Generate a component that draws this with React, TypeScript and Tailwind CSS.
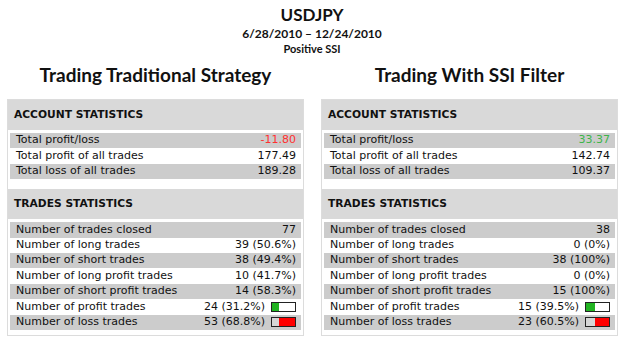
import React from "react";

type Row = { label: string; value: string; color?: string; bar?: { pct: number; kind: "profit" | "loss" } };

const left = {
	title: "Trading Traditional Strategy",
	account: [
		{ label: "Total profit/loss", value: "-11.80", color: "text-[#ff3030]" },
		{ label: "Total profit of all trades", value: "177.49" },
		{ label: "Total loss of all trades", value: "189.28" },
	] as Row[],
	trades: [
		{ label: "Number of trades closed", value: "77" },
		{ label: "Number of long trades", value: "39 (50.6%)" },
		{ label: "Number of short trades", value: "38 (49.4%)" },
		{ label: "Number of long profit trades", value: "10 (41.7%)" },
		{ label: "Number of short profit trades", value: "14 (58.3%)" },
		{ label: "Number of profit trades", value: "24 (31.2%)", bar: { pct: 31.2, kind: "profit" } },
		{ label: "Number of loss trades", value: "53 (68.8%)", bar: { pct: 68.8, kind: "loss" } },
	] as Row[],
};

const right = {
	title: "Trading With SSI Filter",
	account: [
		{ label: "Total profit/loss", value: "33.37", color: "text-[#3db54a]" },
		{ label: "Total profit of all trades", value: "142.74" },
		{ label: "Total loss of all trades", value: "109.37" },
	] as Row[],
	trades: [
		{ label: "Number of trades closed", value: "38" },
		{ label: "Number of long trades", value: "0 (0%)" },
		{ label: "Number of short trades", value: "38 (100%)" },
		{ label: "Number of long profit trades", value: "0 (0%)" },
		{ label: "Number of short profit trades", value: "15 (100%)" },
		{ label: "Number of profit trades", value: "15 (39.5%)", bar: { pct: 39.5, kind: "profit" } },
		{ label: "Number of loss trades", value: "23 (60.5%)", bar: { pct: 60.5, kind: "loss" } },
	] as Row[],
};

function Bar({ pct, kind }: { pct: number; kind: "profit" | "loss" }) {
	return (
		<span className="ml-[6px] flex h-[10px] w-[25px] border border-[#222]">
			{kind === "profit" ? (
				<>
					<span className="h-full bg-[#22b422]" style={{ width: `${pct}%` }} />
					<span className="h-full flex-1 bg-white" />
				</>
			) : (
				<>
					<span className="h-full flex-1 bg-[#d6d6d6]" />
					<span className="h-full bg-[#ff0000]" style={{ width: `${pct}%` }} />
				</>
			)}
		</span>
	);
}

function Rows({ rows }: { rows: Row[] }) {
	return (
		<div className="flex flex-col">
			{rows.map((r, i) => (
				<div
					key={r.label}
					className={`flex h-[15.4px] items-center justify-between pl-[6px] pr-[5px] ${i % 2 === 0 ? "bg-[#cccccc]" : "bg-white"}`}
				>
					<span>{r.label}</span>
					<span className={`flex items-center ${r.color ?? ""}`}>
						{r.value}
						{r.bar && <Bar pct={r.bar.pct} kind={r.bar.kind} />}
					</span>
				</div>
			))}
		</div>
	);
}

function Panel({ data }: { data: typeof left }) {
	return (
		<div className="flex w-[297px] flex-col items-center">
			<h2 className="h-[36px] text-[19px] font-bold leading-[36px] text-[#111] [font-family:Lato,'Open_Sans',sans-serif]">
				{data.title}
			</h2>
			<div className="mt-[6px] w-full border border-[#dcdcdc] text-[11px] text-[#111] [font-family:'DejaVu_Sans',Verdana,sans-serif]">
				<div className="flex h-[30px] items-center bg-[#d9d9d9] pl-[6px] text-[10.7px] font-bold">ACCOUNT STATISTICS</div>
				<div className="bg-white px-[2px] pt-[3px] pb-[10px]">
					<Rows rows={data.account} />
				</div>
				<div className="flex h-[30px] items-center bg-[#d9d9d9] pl-[6px] text-[10.7px] font-bold">TRADES STATISTICS</div>
				<div className="bg-white px-[2px] pt-[3px] pb-[5px]">
					<Rows rows={data.trades} />
				</div>
			</div>
		</div>
	);
}

export default function App() {
	return (
		<div className="h-[337px] w-[624px] overflow-hidden bg-white [font-family:Lato,'Open_Sans',sans-serif]">
			<div className="flex flex-col items-center pt-[4px] font-bold text-[#111]">
				<div className="text-[17px] leading-[22px]">USDJPY</div>
				<div className="text-[12px] leading-[16px]">6/28/2010 – 12/24/2010</div>
				<div className="text-[11px] leading-[14px]">Positive SSI</div>
			</div>
			<div className="mt-[1px] flex justify-between pl-[7px] pr-[6px]">
				<Panel data={left} />
				<Panel data={right} />
			</div>
		</div>
	);
}
